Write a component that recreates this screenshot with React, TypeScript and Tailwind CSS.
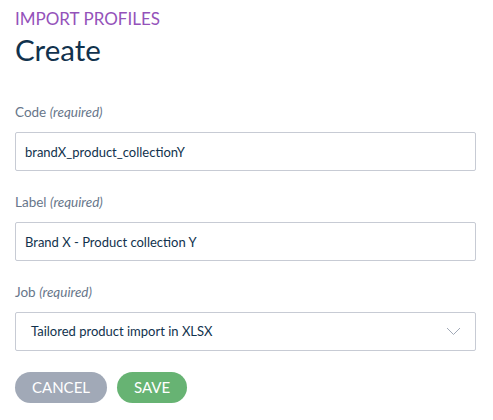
import React from "react";

function Field({ label, value }: { label: string; value: string }) {
  return (
    <div className="flex flex-col">
      <label className="text-[13.5px] leading-[16px] text-[#67768a]">
        {label} <em className="italic">(required)</em>
      </label>
      <input
        readOnly
        value={value}
        className="mt-[12px] h-[39px] w-[461px] border border-[#c7cbd4] rounded-[2px] px-[9px] text-[13px] text-[#11324d] outline-none"
      />
    </div>
  );
}

export default function App() {
  return (
    <div className="min-h-[420px] bg-white pl-[15px] pt-[9px] font-['Lato','Noto_Sans',sans-serif]">
      <div className="text-[17px] leading-[20px] text-[#9452ba]">IMPORT PROFILES</div>
      <h1 className="text-[29.5px] leading-[34px] text-[#11324d] mt-[4px]">Create</h1>
      <div className="mt-[37px] flex flex-col gap-[23px]">
        <Field label="Code" value="brandX_product_collectionY" />
        <Field label="Label" value="Brand X - Product collection Y" />
        <div className="flex flex-col">
          <label className="text-[13.5px] leading-[16px] text-[#67768a]">
            Job <em className="italic">(required)</em>
          </label>
          <div className="mt-[12px] h-[39px] w-[461px] border border-[#c7cbd4] rounded-[2px] pl-[15px] pr-[14px] flex items-center justify-between text-[13px] text-[#11324d]">
            <span>Tailored product import in XLSX</span>
            <svg width="15" height="9" viewBox="0 0 15 9" fill="none">
              <path d="M1 1l6.5 6.5L14 1" stroke="#a1a9b7" strokeWidth="1" />
            </svg>
          </div>
        </div>
      </div>
      <div className="mt-[21px] flex gap-[10px]">
        <button className="h-[31px] w-[92px] rounded-full bg-[#a1a9b7] text-white text-[15px] uppercase">
          Cancel
        </button>
        <button className="h-[31px] w-[70px] rounded-full bg-[#67b373] text-white text-[15px] uppercase">
          Save
        </button>
      </div>
    </div>
  );
}
